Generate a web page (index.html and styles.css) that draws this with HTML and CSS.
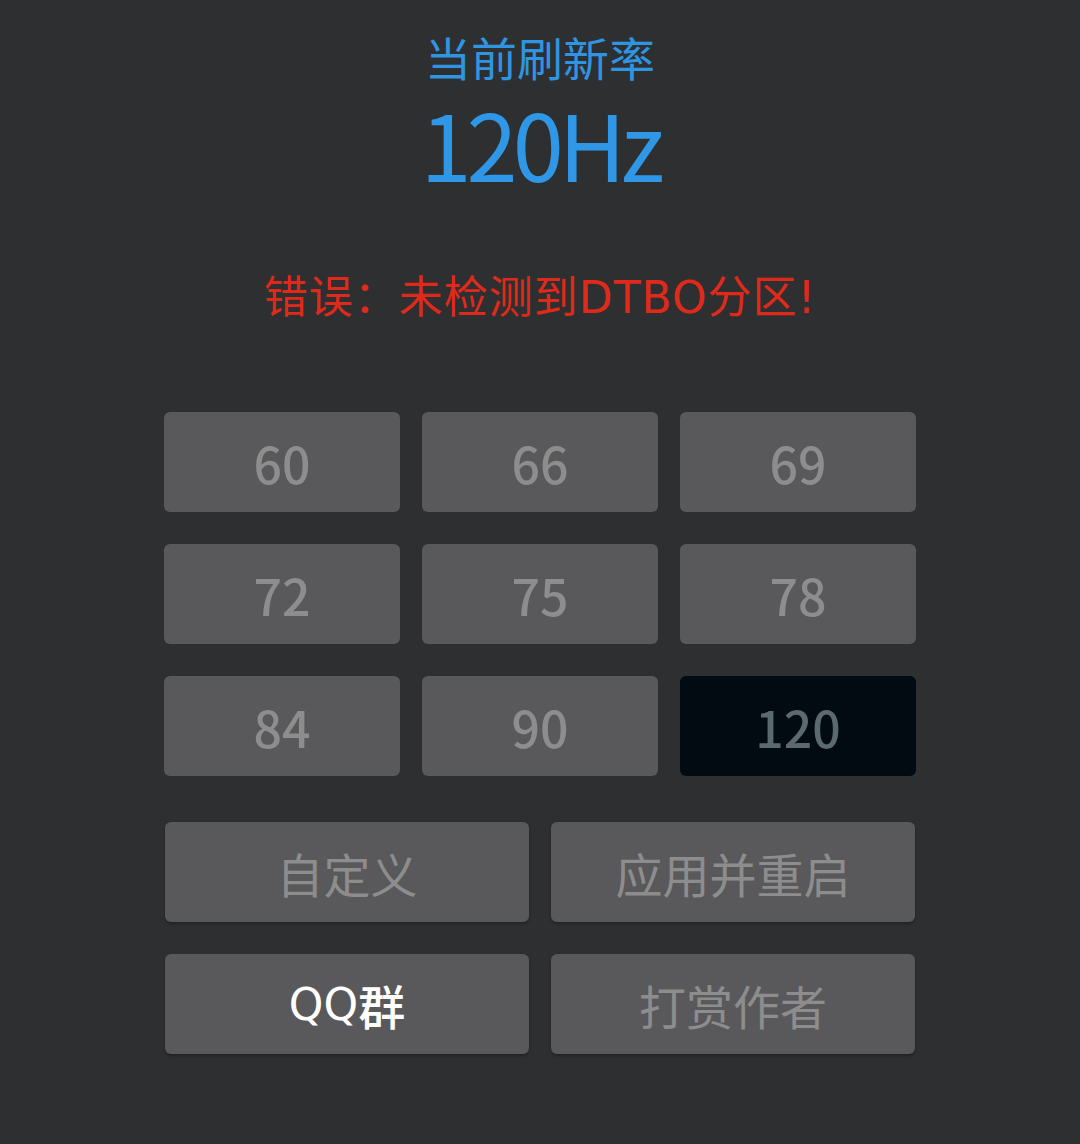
FILE: index.html
```html
<!DOCTYPE html>
<html lang="zh-CN">
<head>
<meta charset="utf-8">
<title>刷新率</title>
<link rel="stylesheet" href="styles.css">
</head>
<body>
<main class="page">
  <div class="title">当前刷新率</div>
  <div class="hz">120Hz</div>
  <div class="error">错误：未检测到<span class="latin">DTBO</span>分区<span class="latin">!</span></div>
  <div class="grid">
    <div class="btn num">60</div>
    <div class="btn num">66</div>
    <div class="btn num">69</div>
    <div class="btn num">72</div>
    <div class="btn num">75</div>
    <div class="btn num">78</div>
    <div class="btn num">84</div>
    <div class="btn num">90</div>
    <div class="btn num active">120</div>
  </div>
  <div class="actions">
    <div class="btn wide">自定义</div>
    <div class="btn wide">应用并重启</div>
    <div class="btn wide bright"><span class="latin">QQ</span>群</div>
    <div class="btn wide">打赏作者</div>
  </div>
</main>
</body>
</html>
```
FILE: styles.css
```css
html, body {
  margin: 0;
  padding: 0;
  background: #2e2f31;
}
body {
  font-family: "Noto Sans CJK SC", "Noto Sans", sans-serif;
  height: 1144px;
  overflow: hidden;
}
.page {
  display: flex;
  flex-direction: column;
  align-items: center;
}
.latin {
  font-family: "DejaVu Sans", "Noto Sans CJK SC", sans-serif;
}
.title {
  margin-top: 26px;
  height: 60px;
  line-height: 60px;
  font-size: 46px;
  color: #2f95e0;
}
.hz {
  height: 112px;
  line-height: 112px;
  font-size: 92px;
  letter-spacing: -5px;
  color: #2f97e6;
}
.error {
  margin-top: 66px;
  height: 60px;
  line-height: 60px;
  font-size: 44px;
  letter-spacing: 1px;
  color: #df2a1b;
}
.grid {
  margin-top: 88px;
  display: grid;
  grid-template-columns: repeat(3, 236px);
  grid-auto-rows: 100px;
  column-gap: 22px;
  row-gap: 32px;
}
.btn {
  display: flex;
  align-items: center;
  justify-content: center;
  background: #59595b;
  border-radius: 6px;
  color: #8d8d8d;
  font-size: 47px;
}
.num {
  font-size: 50px;
  font-weight: 500;
}
.active {
  background: #020a12;
  color: #5d6970;
}
.actions {
  margin-top: 46px;
  display: grid;
  grid-template-columns: repeat(2, 364px);
  grid-auto-rows: 100px;
  column-gap: 22px;
  row-gap: 32px;
}
.wide {
  box-shadow: 0 2px 3px rgba(0, 0, 0, 0.25);
}
.bright {
  color: #ffffff;
  font-weight: 500;
}
.bright .latin {
  font-size: 44px;
}
```
